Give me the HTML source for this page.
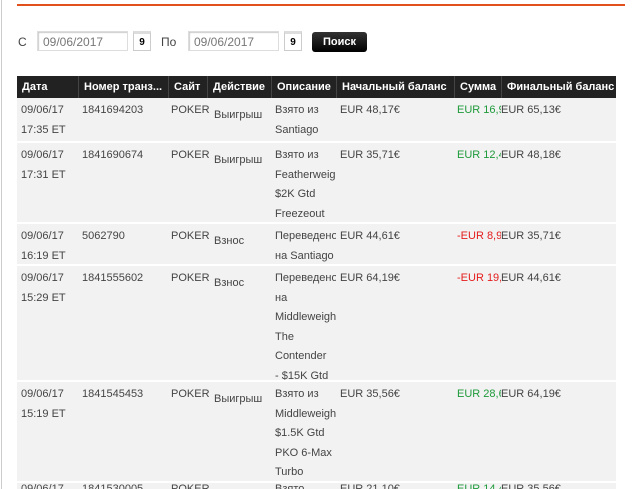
<!DOCTYPE html><html><head><meta charset="utf-8"><style>
html,body{margin:0;width:632px;height:489px;overflow:hidden}
body{background:#fff;font-family:"Liberation Sans","DejaVu Sans",sans-serif;font-size:11px;color:#444;position:relative}
.lb{position:absolute;left:1px;top:0;width:1px;height:489px;background:#ccc}
.or{position:absolute;left:17px;top:4px;width:608px;height:2px;background:#e2501c}
.a{position:absolute;white-space:nowrap}
.inp{position:absolute;height:20px;border:1px solid #ddd;box-shadow:inset 1px 1px 1px #ccc;background:#fff;color:#777;font-size:12px;line-height:20px;padding-left:5px;box-sizing:border-box}
.cal{position:absolute;width:18px;height:20px;border:1px solid #ccc;border-top:3px solid #ddd;box-sizing:border-box;font-weight:bold;font-size:10px;color:#000;text-align:center;line-height:17px;background:#fff}
.btn{position:absolute;left:312px;top:32px;width:55px;height:20px;background:linear-gradient(#333,#000);border-radius:3px;color:#fff;font-weight:bold;font-size:11px;text-align:center;line-height:20px}
.hd{position:absolute;left:17px;top:76px;width:599px;height:22px;background:#222}
.hd div{position:absolute;top:0;height:22px;line-height:22px;color:#fff;font-weight:bold;font-size:11px;padding-left:5px;box-sizing:border-box;border-left:1px solid #444;overflow:hidden;white-space:nowrap}
.r{position:absolute;left:17px;width:599px;background:#f2f2f2;overflow:hidden}
.r div{position:absolute;top:3px;line-height:19.5px;overflow:hidden;white-space:nowrap}
.r.last div{top:-3px}
.g{color:#1e9a3a}.red{color:#e51c1c}
</style></head><body>
<div class="lb"></div><div class="or"></div>
<div class="a" style="left:18px;top:35px;font-size:12px">С</div>
<div class="inp" style="left:37px;top:31px;width:91px">09/06/2017</div>
<div class="cal" style="left:133px;top:31px">9</div>
<div class="a" style="left:161px;top:35px;font-size:12px">По</div>
<div class="inp" style="left:188px;top:31px;width:91px">09/06/2017</div>
<div class="cal" style="left:284px;top:31px">9</div>
<div class="btn">Поиск</div>
<div class="hd">
<div style="left:0;width:61px;border:0">Дата</div>
<div style="left:61px;width:90px">Номер транз...</div>
<div style="left:151px;width:39px">Сайт</div>
<div style="left:190px;width:64px">Действие</div>
<div style="left:254px;width:65px">Описание</div>
<div style="left:319px;width:118px">Начальный баланс</div>
<div style="left:437px;width:47px">Сумма</div>
<div style="left:484px;width:115px">Финальный баланс</div>
</div>

<div class="r" style="top:98px;height:43px">
<div style="left:4px">09/06/17<br>17:35 ET</div><div style="left:65px">1841694203</div><div style="left:154px">POKER</div><div style="left:197px;top:8px">Выигрыш</div><div style="left:258px;width:61px">Взято из<br>Santiago</div><div style="left:323px">EUR 48,17€</div><div class="g" style="left:440px;width:44px">EUR 16,96€</div><div style="left:484px">EUR 65,13€</div>
</div>
<div class="r" style="top:143px;height:79px">
<div style="left:4px">09/06/17<br>17:31 ET</div><div style="left:65px">1841690674</div><div style="left:154px">POKER</div><div style="left:197px;top:8px">Выигрыш</div><div style="left:258px;width:61px">Взято из<br>Featherweight<br>$2K Gtd<br>Freezeout</div><div style="left:323px">EUR 35,71€</div><div class="g" style="left:440px;width:44px">EUR 12,46€</div><div style="left:484px">EUR 48,18€</div>
</div>
<div class="r" style="top:224px;height:40px">
<div style="left:4px">09/06/17<br>16:19 ET</div><div style="left:65px">5062790</div><div style="left:154px">POKER</div><div style="left:197px;top:8px">Взнос</div><div style="left:258px;width:61px">Переведено<br>на Santiago</div><div style="left:323px">EUR 44,61€</div><div class="red" style="left:440px;width:44px">-EUR 8,90€</div><div style="left:484px">EUR 35,71€</div>
</div>
<div class="r" style="top:266px;height:114px">
<div style="left:4px">09/06/17<br>15:29 ET</div><div style="left:65px">1841555602</div><div style="left:154px">POKER</div><div style="left:197px;top:8px">Взнос</div><div style="left:258px;width:61px">Переведено<br>на<br>Middleweight<br>The<br>Contender<br>- $15K Gtd</div><div style="left:323px">EUR 64,19€</div><div class="red" style="left:440px;width:44px">-EUR 19,58€</div><div style="left:484px">EUR 44,61€</div>
</div>
<div class="r" style="top:382px;height:99px">
<div style="left:4px">09/06/17<br>15:19 ET</div><div style="left:65px">1841545453</div><div style="left:154px">POKER</div><div style="left:197px;top:8px">Выигрыш</div><div style="left:258px;width:61px">Взято из<br>Middleweight<br>$1.5K Gtd<br>PKO 6-Max<br>Turbo</div><div style="left:323px">EUR 35,56€</div><div class="g" style="left:440px;width:44px">EUR 28,63€</div><div style="left:484px">EUR 64,19€</div>
</div>
<div class="r last" style="top:483px;height:30px">
<div style="left:4px">09/06/17</div><div style="left:65px">1841530005</div><div style="left:154px">POKER</div><div style="left:258px;width:61px">Взято</div><div style="left:323px">EUR 21,10€</div><div class="g" style="left:440px;width:44px">EUR 14,46€</div><div style="left:484px">EUR 35,56€</div>
</div>
</body></html>
